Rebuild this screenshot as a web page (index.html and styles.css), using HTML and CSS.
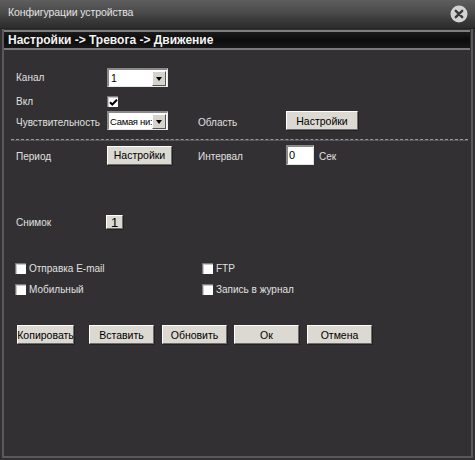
FILE: index.html
```html
<!DOCTYPE html>
<html>
<head>
<meta charset="utf-8">
<link rel="stylesheet" href="styles.css">
</head>
<body>
<div class="window">
  <div class="titlebar">
    <span class="title">Конфигурации устройства</span>
    <span class="close"><svg width="18" height="18" viewBox="0 0 18 18"><circle cx="9" cy="9" r="8.5" fill="#d2d2d2"/><path d="M5.8 5.8 L12.2 12.2 M12.2 5.8 L5.8 12.2" stroke="#3a3a3a" stroke-width="2.4" stroke-linecap="round"/></svg></span>
  </div>
  <div class="body">
    <div class="crumb">Настройки -&gt; Тревога -&gt; Движение</div>
    <div class="form">
      <div class="row r-channel">
        <span class="label">Канал</span>
        <span class="select w60"><span class="val">1</span><span class="arrow"></span></span>
      </div>
      <div class="row r-enable">
        <span class="label">Вкл</span>
        <span class="check checked"><svg width="9" height="9" viewBox="0 0 9 9"><path d="M1 4.2 L3.3 6.5 L8 1.8" stroke="#000" stroke-width="2" fill="none"/></svg></span>
      </div>
      <div class="row r-sens">
        <span class="label">Чувствительность</span>
        <span class="select w60"><span class="val tight">Самая ни:</span><span class="arrow"></span></span>
        <span class="label2 l-area">Область</span>
        <span class="btn b-area">Настройки</span>
      </div>
      <div class="sep"></div>
      <div class="row r-period">
        <span class="label">Период</span>
        <span class="btn b-period">Настройки</span>
        <span class="label2 l-int">Интервал</span>
        <span class="input">0</span>
        <span class="unit">Сек</span>
      </div>
      <div class="row r-snap">
        <span class="label">Снимок</span>
        <span class="btn b-snap">1</span>
      </div>
      <div class="row r-c1">
        <span class="cb-item"><span class="check"></span>Отправка E-mail</span>
        <span class="cb-item right"><span class="check"></span>FTP</span>
      </div>
      <div class="row r-c2">
        <span class="cb-item"><span class="check"></span>Мобильный</span>
        <span class="cb-item right"><span class="check"></span>Запись в журнал</span>
      </div>
      <div class="actions">
        <span class="btn b-copy">Копировать</span>
        <span class="btn b-act">Вставить</span>
        <span class="btn b-act g8">Обновить</span>
        <span class="btn b-act g7">Ок</span>
        <span class="btn b-act g8">Отмена</span>
      </div>
    </div>
  </div>
</div>
</body>
</html>
```

FILE: styles.css
```css
* { box-sizing: border-box; }
html, body { margin: 0; padding: 0; background: #2f2d2f; }
body { width: 475px; height: 460px; overflow: hidden; font-family: "Liberation Sans", Arial, sans-serif; font-size: 10px; }
.window {
  width: 475px; height: 460px;
  background: #323032;
  display: flex; flex-direction: column;
}
.titlebar {
  height: 29px; flex: none;
  background: linear-gradient(#5e5e5e 0%, #4a4a4a 45%, #383838 75%, #2c2c2c 100%);
  display: flex; align-items: center; justify-content: space-between;
  padding: 0 7px 0 8px;
  border-bottom: 1px solid #242424;
}
.title { color: #e2e2e2; font-size: 10.5px; position: relative; top: -2px; letter-spacing: -0.1px; }
.close { width: 18px; height: 18px; display: block; position: relative; top: 0; }
.close svg { display: block; }
.body {
  flex: 1;
  margin: 0 2px 2px 2px;
  border-left: 2px solid #5a5a5a;
  border-right: 2px solid #5a5a5a;
  border-bottom: 2px solid #5a5a5a;
  background: #323032;
  padding-top: 1px;
}
.crumb {
  margin: 0 1px 0 0;
  height: 20px;
  border-top: 2px solid #7e7e7e;
  border-bottom: 2px solid #7a7a7a;
  background: linear-gradient(#1a1a1a, #0c0c0c 50%, #181818);
  color: #f4f4f4; font-weight: bold; font-size: 12px;
  padding-left: 4px; line-height: 16px;
}
.form { padding-left: 12px; color: #e0e0e0; }
.row { display: flex; align-items: center; }
.label { width: 91px; flex: none; color: #e0e0e0; }
.label2 { width: 88px; flex: none; margin-left: 27px; }
.label2.l-area { margin-left: 30px; }
.select {
  display: flex; height: 19px; background: #fff;
  border-top: 2px solid #8a8a8a; border-left: 2px solid #8a8a8a;
  border-right: 1px solid #e8e8e8; border-bottom: 1px solid #e8e8e8;
  color: #000; align-items: center; overflow: hidden;
  font-size: 10.5px;
}
.w60 { width: 61px; }
.val { flex: 1; padding-left: 2px; white-space: nowrap; overflow: hidden; }
.val.tight { font-size: 9.5px; letter-spacing: -0.3px; padding-left: 1px; }
.arrow {
  width: 14px; height: 15px; flex: none; margin-right: 1px;
  background: #d6d3cc;
  border-top: 1px solid #fff; border-left: 1px solid #fff;
  border-right: 1px solid #555; border-bottom: 1px solid #555;
  position: relative;
}
.arrow::after {
  content: ""; position: absolute; left: 3px; top: 5px;
  border-left: 3px solid transparent; border-right: 3px solid transparent;
  border-top: 4px solid #000;
}
.check {
  width: 11px; height: 11px; flex: none; background: #fff;
  border-top: 1px solid #7a7a7a; border-left: 1px solid #7a7a7a;
  display: flex; align-items: center; justify-content: center;
  box-shadow: inset 1px 1px 0 #c8c8c8;
}
.check svg { display: block; }
.btn {
  display: flex; align-items: center; justify-content: center;
  background: #dcd9d2; color: #000;
  border-top: 1px solid #fff; border-left: 1px solid #fff;
  border-right: 1px solid #6e6e6e; border-bottom: 1px solid #6e6e6e;
  box-shadow: 1px 1px 0 #222;
  flex: none; font-size: 10.5px;
}
.r-channel { margin-top: 18px; height: 19px; }
.r-enable { margin-top: 9px; height: 11px; }
.r-sens { margin-top: 4px; height: 19px; }
.r-sens .label, .r-sens .label2 { position: relative; top: 2px; }
.b-area { width: 72px; height: 19px; }
.sep { height: 2px; margin: 9px 3px 0 -5px; border-top: 1px dashed #9a9a9a; border-bottom: 1px solid #555; }
.r-period { margin-top: 4px; height: 20px; }
.r-period .label, .r-period .label2, .r-period .unit { position: relative; top: 1px; }
.b-period { width: 65px; height: 19px; }
.l-int { margin-left: 26px; }
.input {
  width: 28px; height: 20px; background: #fff; color: #000;
  border-top: 2px solid #8a8a8a; border-left: 2px solid #8a8a8a;
  border-right: 1px solid #e0e0e0; border-bottom: 1px solid #e0e0e0;
  padding-left: 1px; line-height: 16px; flex: none; font-size: 11px;
}
.unit { margin-left: 5px; }
.r-snap { margin-top: 50px; height: 14px; }
.b-snap { width: 17px; height: 14px; margin-left: -1px; font-size: 13px; }
.r-c1 { margin-top: 33px; height: 12px; }
.r-c2 { margin-top: 9px; height: 12px; }
.cb-item { display: flex; align-items: center; width: 187px; flex: none; margin-left: -1px; }
.cb-item .check { margin-right: 3px; }
.cb-item.right { margin-left: 0; }
.actions { display: flex; margin-top: 30px; height: 19px; margin-left: 1px; }
.actions .btn { height: 19px; }
.b-copy { width: 57px; }
.b-act { width: 65px; margin-left: 15px; }
.b-act.g8 { margin-left: 8px; }
.b-act.g7 { margin-left: 7px; }
```
